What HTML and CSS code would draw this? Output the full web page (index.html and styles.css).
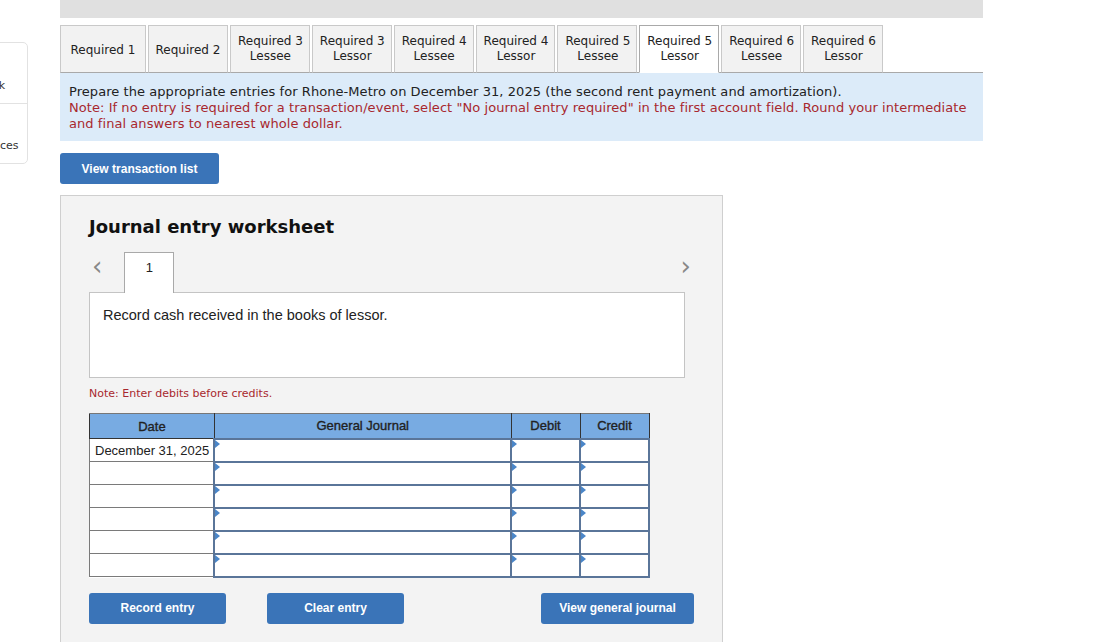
FILE: index.html
```html
<!DOCTYPE html>
<html>

<head>
    <meta name="viewport" content="width=device-width, initial-scale=1.0">
    <title>Journal entry worksheet</title>
    <link rel="stylesheet" href="styles.css">
</head>

<body>
    <div class="page">
        <aside class="side">
            <div class="side-card">
                <div class="side-item">eBook</div>
                <div class="side-item">References</div>
            </div>
        </aside>

        <main class="main">
            <div class="topbar"></div>

            <div class="tabs">
                <div class="tab tab-first">Required 1</div>
                <div class="tab tab-second">Required 2</div>
                <div class="tab">Required 3<br>Lessee</div>
                <div class="tab">Required 3<br>Lessor</div>
                <div class="tab">Required 4<br>Lessee</div>
                <div class="tab">Required 4<br>Lessor</div>
                <div class="tab">Required 5<br>Lessee</div>
                <div class="tab active">Required 5<br>Lessor</div>
                <div class="tab">Required 6<br>Lessee</div>
                <div class="tab">Required 6<br>Lessor</div>
            </div>

            <div class="instructions">
                Prepare the appropriate entries for Rhone-Metro on December 31, 2025 (the second rent payment and amortization).
                <div class="note">Note: If no entry is required for a transaction/event, select "No journal entry required" in the first account field. Round your intermediate and final answers to nearest whole dollar.</div>
            </div>

            <button class="btn btn-list">View transaction list</button>

            <section class="worksheet">
                <h2>Journal entry worksheet</h2>

                <div class="entry-nav">
                    <div class="nav-left">
                        <span class="arrow">&lsaquo;</span>
                        <div class="entry-tab">1</div>
                    </div>
                    <span class="arrow">&rsaquo;</span>
                </div>

                <div class="description">Record cash received in the books of lessor.</div>

                <p class="debit-note">Note: Enter debits before credits.</p>

                <table class="journal">
                    <thead>
                        <tr>
                            <th class="col-date">Date</th>
                            <th class="col-account">General Journal</th>
                            <th class="col-amount">Debit</th>
                            <th class="col-amount">Credit</th>
                        </tr>
                    </thead>
                    <tbody>
                        <tr>
                            <td class="date">December 31, 2025</td>
                            <td class="field"></td>
                            <td class="field"></td>
                            <td class="field"></td>
                        </tr>
                        <tr>
                            <td class="date"></td>
                            <td class="field"></td>
                            <td class="field"></td>
                            <td class="field"></td>
                        </tr>
                        <tr>
                            <td class="date"></td>
                            <td class="field"></td>
                            <td class="field"></td>
                            <td class="field"></td>
                        </tr>
                        <tr>
                            <td class="date"></td>
                            <td class="field"></td>
                            <td class="field"></td>
                            <td class="field"></td>
                        </tr>
                        <tr>
                            <td class="date"></td>
                            <td class="field"></td>
                            <td class="field"></td>
                            <td class="field"></td>
                        </tr>
                        <tr>
                            <td class="date"></td>
                            <td class="field"></td>
                            <td class="field"></td>
                            <td class="field"></td>
                        </tr>
                    </tbody>
                </table>

                <div class="actions">
                    <button class="btn btn-record">Record entry</button>
                    <button class="btn btn-clear">Clear entry</button>
                    <button class="btn btn-journal">View general journal</button>
                </div>
            </section>
        </main>
    </div>
</body>

</html>
```

FILE: styles.css
```css
* {
    box-sizing: border-box;
}

body {
    margin: 0;
    background: #fff;
    font-family: "DejaVu Sans", Verdana, sans-serif;
    color: #222;
    overflow: hidden;
}

.page {
    display: flex;
    align-items: flex-start;
}

.side {
    width: 28px;
    margin-right: 32px;
    padding-top: 42px;
    overflow: hidden;
}

.side-card {
    width: 80px;
    margin-left: -52px;
    background: #fff;
    border: 1px solid #e2e2e2;
    border-radius: 0 5px 5px 0;
}

.side-item {
    height: 60px;
    padding-bottom: 11px;
    display: flex;
    align-items: flex-end;
    justify-content: center;
    font-size: 11px;
    color: #333;
}

.side-item + .side-item {
    border-top: 1px solid #e2e2e2;
}

.main {
    width: 923px;
}

.topbar {
    height: 18px;
    background: #e0e0e0;
}

.tabs {
    display: flex;
    gap: 2px;
    margin-top: 7px;
    border-bottom: 1px solid #a9a9a9;
}

.tab {
    height: 48px;
    margin-bottom: -1px;
    padding: 0 6px 0 7px;
    display: flex;
    align-items: center;
    justify-content: center;
    text-align: center;
    font-size: 12px;
    line-height: 15px;
    background: #f2f2f2;
    border: 1px solid #c9c9c9;
    border-bottom: 1px solid #a9a9a9;
    color: #222;
}

.tab-first {
    width: 86px;
    padding: 2px 0 0;
}

.tab-second {
    width: 80px;
    padding: 2px 0 0;
}

.active {
    background: #fff;
    border-color: #a9a9a9;
    border-bottom-color: #fff;
}

.instructions {
    background: #dcebf9;
    padding: 11px 9px 9px;
    font-size: 13px;
    line-height: 16px;
    letter-spacing: 0.06px;
    color: #222;
}

.note {
    color: #a8282e;
}

.btn {
    height: 31px;
    border: none;
    border-radius: 3px;
    background: #3a74b8;
    color: #fff;
    font-family: "Liberation Sans", Arial, sans-serif;
    font-weight: bold;
    font-size: 12px;
    cursor: pointer;
}

.btn-list {
    display: block;
    width: 159px;
    margin-top: 12px;
}

.worksheet {
    width: 663px;
    height: 460px;
    margin-top: 11px;
    padding: 18px 28px 0;
    background: #f3f3f3;
    border: 1px solid #cfcfcf;
}

.worksheet h2 {
    margin: 0;
    font-size: 18px;
    line-height: 26px;
    color: #111;
}

.entry-nav {
    display: flex;
    justify-content: space-between;
    align-items: flex-end;
    margin-top: 12px;
}

.nav-left {
    display: flex;
    align-items: flex-end;
}

.arrow {
    font-family: "DejaVu Sans", sans-serif;
    font-size: 26px;
    line-height: 26px;
    color: #888;
    align-self: flex-start;
    margin-top: 1px;
    padding: 0 3px;
}

.entry-tab {
    width: 50px;
    height: 41px;
    margin-left: 19px;
    margin-bottom: -1px;
    padding-top: 7px;
    text-align: center;
    font-family: "Liberation Sans", Arial, sans-serif;
    font-size: 13px;
    background: #fff;
    border: 1px solid #a9a9a9;
    border-bottom: none;
    position: relative;
    z-index: 1;
}

.description {
    width: 596px;
    height: 86px;
    padding: 14px 13px;
    background: #fff;
    border: 1px solid #c4c4c4;
    font-family: "Liberation Sans", Arial, sans-serif;
    font-size: 14.5px;
    color: #222;
}

.debit-note {
    margin: 9px 0 12px;
    font-size: 11px;
    line-height: 14px;
    color: #a8282e;
}

.journal {
    width: 561px;
    border-collapse: collapse;
    font-family: "Liberation Sans", Arial, sans-serif;
    font-size: 13px;
    background: #fff;
}

.journal th {
    height: 25px;
    padding: 0;
    background: #78abe2;
    border: 1px solid #333;
    border-top-color: #777;
    font-weight: normal;
    color: #222;
    -webkit-text-stroke: 0.35px #222;
}

.col-date {
    width: 125px;
}

.col-account {
    width: 297px;
}

.col-amount {
    width: 69px;
}

.journal td {
    height: 23px;
    padding: 0;
}

.journal .date {
    padding-left: 5px;
    border: 1px solid #7a7a7a;
    color: #222;
}

.journal .field {
    position: relative;
    border: 2px solid #5a7599;
}

.journal .field::before {
    content: "";
    position: absolute;
    top: 0;
    left: 0;
    border-left: 5px solid #4a86c8;
    border-top: 4px solid transparent;
    border-bottom: 4px solid transparent;
}

.actions {
    display: flex;
    gap: 41px;
    margin-top: 15px;
}

.btn-record,
.btn-clear {
    width: 137px;
}

.btn-journal {
    width: 153px;
    margin-left: auto;
}
```
